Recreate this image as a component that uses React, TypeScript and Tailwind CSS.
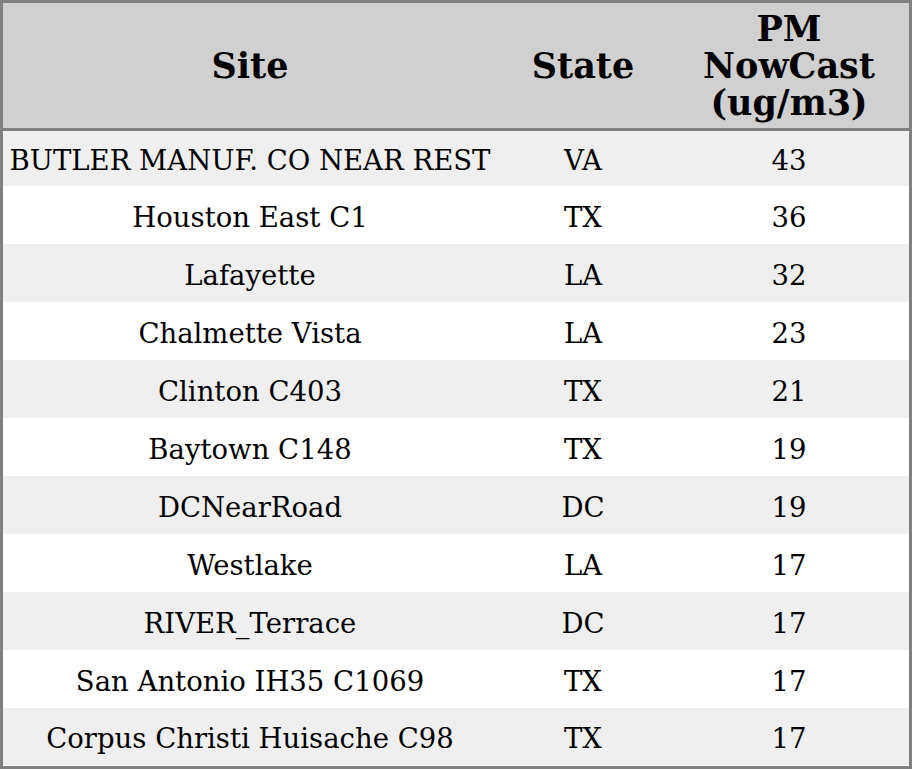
const rows: [string, string, string][] = [
  ["BUTLER MANUF. CO NEAR REST", "VA", "43"],
  ["Houston East C1", "TX", "36"],
  ["Lafayette", "LA", "32"],
  ["Chalmette Vista", "LA", "23"],
  ["Clinton C403", "TX", "21"],
  ["Baytown C148", "TX", "19"],
  ["DCNearRoad", "DC", "19"],
  ["Westlake", "LA", "17"],
  ["RIVER_Terrace", "DC", "17"],
  ["San Antonio IH35 C1069", "TX", "17"],
  ["Corpus Christi Huisache C98", "TX", "17"],
];

const heights = ["h-[57px]", "h-[58px]", "h-[58px]", "h-[58px]", "h-[58px]", "h-[58px]", "h-[58px]", "h-[58px]", "h-[58px]", "h-[58px]", "h-[57px]"];

export default function App() {
  return (
    <div className="h-[769px] w-[912px] border-[3px] border-[#808080] bg-white font-['DejaVu_Serif',serif] text-black">
      <table className="w-full table-fixed border-collapse">
        <colgroup>
          <col className="w-[494px]" />
          <col className="w-[172px]" />
          <col className="w-[240px]" />
        </colgroup>
        <thead>
          <tr className="h-[126px] border-b-[3px] border-[#808080] bg-[#d0d0d0] text-[35px] leading-[37px] font-bold">
            <th className="p-0 text-center">Site</th>
            <th className="p-0 text-center">State</th>
            <th className="p-0 text-center">
              PM
              <br />
              NowCast
              <br />
              (ug/m3)
            </th>
          </tr>
        </thead>
        <tbody className="text-[27.5px] leading-[30px]">
          {rows.map(([site, state, pm], i) => (
            <tr key={i} className={`${heights[i]} ${i % 2 === 0 ? "bg-[#efefef]" : "bg-white"}`}>
              <td className="p-0 pt-[3px] text-center whitespace-nowrap">{site}</td>
              <td className="p-0 pt-[3px] text-center">{state}</td>
              <td className="p-0 pt-[3px] text-center">{pm}</td>
            </tr>
          ))}
        </tbody>
      </table>
    </div>
  );
}
